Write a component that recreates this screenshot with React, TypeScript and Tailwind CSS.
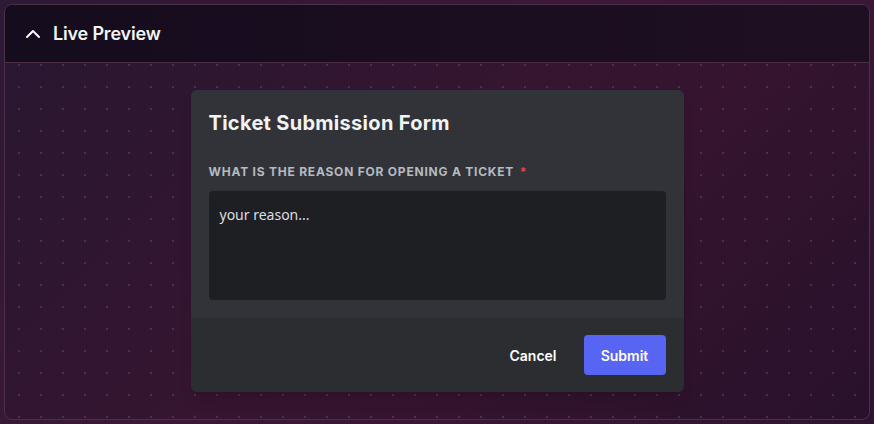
import { ChevronUp } from 'lucide-react';

export default function App() {
  return (
    <div className="w-[874px] h-[424px] p-1 bg-[linear-gradient(135deg,#2d1a36_0%,#3b1836_45%,#3c1735_60%,#2e1430_100%)] font-['Inter',sans-serif]">
      <div className="h-full flex flex-col rounded-lg border border-[#4d2f49] overflow-hidden bg-black/10">
        {/* Header */}
        <div className="h-[58px] shrink-0 flex items-center gap-[8px] px-[16px] bg-[linear-gradient(90deg,#150c1e,#1f0f22)] border-b border-[#4a2c46]">
          <ChevronUp className="w-6 h-6 text-white" strokeWidth={2} />
          <span className="text-[18px] font-semibold text-[#f2f3f5] tracking-[-0.01em]">Live Preview</span>
        </div>

        {/* Preview canvas */}
        <div className="flex-1 flex items-center justify-center bg-[radial-gradient(circle,rgba(255,255,255,0.12)_1px,transparent_1.3px)] bg-[size:22px_22px] bg-center">
          <div className="w-[493px] rounded-md overflow-hidden shadow-lg">
            <div className="bg-[#313338] px-[18px] pt-[19px] pb-[18px]">
              <h2 className="text-[20px] leading-[28px] font-bold text-[#f2f3f5] tracking-[0.015em]">
                Ticket Submission Form
              </h2>
              <div className="mt-[27px] mb-[11px] text-[12px] leading-[16px] font-bold uppercase tracking-[0.065em] text-[#b5bac1]">
                What is the reason for opening a ticket <span className="text-[#f23f42] ml-0.5">*</span>
              </div>
              <textarea
                placeholder="your reason..."
                className="block w-full h-[109px] resize-none rounded bg-[#1e1f22] px-[11px] py-[14px] text-[14px] leading-[20px] text-[#dbdee1] placeholder:text-[#dbdee1] font-['Noto_Sans',sans-serif] outline-none"
              />
            </div>
            <div className="bg-[#2b2d31] px-[18px] py-[17px] flex justify-end items-center gap-[11px]">
              <button className="h-10 px-4 text-[14px] font-semibold text-white">Cancel</button>
              <button className="h-10 w-[82px] rounded bg-[#5865f2] text-[14px] font-semibold text-white">
                Submit
              </button>
            </div>
          </div>
        </div>
      </div>
    </div>
  );
}
